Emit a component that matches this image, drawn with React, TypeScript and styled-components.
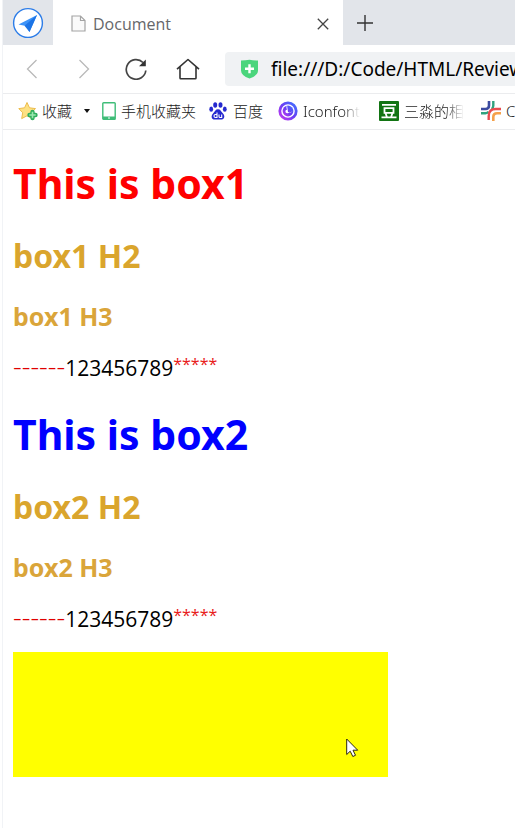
import React from "react";
import styled, { createGlobalStyle } from "styled-components";

const GlobalStyle = createGlobalStyle`
  * { box-sizing: border-box; }
  body {
    margin: 0;
    background: #fff;
    color: #000;
    font-family: "Noto Sans", "Noto Sans CJK SC", sans-serif;
    overflow-x: hidden;
  }
  button { border: 0; padding: 0; background: none; font: inherit; color: inherit; }
  svg { display: block; flex: none; }
`;

const Window = styled.div`
  min-height: 100vh;
  margin-left: 2px;
  border-left: 1px solid #f1f3f6;
  overflow: hidden;
`;

const TabStrip = styled.div`
  display: flex;
  height: 45px;
  background: #e2e5ea;
`;

const BrandButton = styled.button`
  width: 50px;
  display: grid;
  place-items: center;
`;

const Tab = styled.div`
  display: flex;
  align-items: center;
  flex: 0 0 290px;
  padding: 2px 13px 0 18px;
  background: #fff;
  font-family: "Open Sans", sans-serif;
  font-size: 16px;
  line-height: 24px;
  color: #66676a;
`;

const TabTitle = styled.span`
  flex: 1;
  margin-left: 7px;
`;

const NewTabButton = styled.button`
  width: 44px;
  display: grid;
  place-items: center;
`;

const Toolbar = styled.div`
  display: flex;
  align-items: center;
  height: 49px;
  border-bottom: 1px solid #ebecee;
`;

const NavButtons = styled.nav`
  display: flex;
  flex: none;
  padding: 0 11px 0 3px;
`;

const NavButton = styled.button`
  width: 52px;
  height: 40px;
  display: grid;
  place-items: center;
`;

const AddressBar = styled.label`
  display: flex;
  flex: 1;
  align-items: center;
  gap: 12px;
  height: 34px;
  padding-left: 15px;
  border-radius: 4px 0 0 4px;
  background: #f0f2f4;
`;

const AddressInput = styled.input`
  flex: 1;
  min-width: 0;
  height: 32px;
  border: 0;
  padding: 0;
  outline: 0;
  background: none;
  color: #000;
  font-family: "Noto Sans", sans-serif;
  font-size: 19px;
`;

const Bookmarks = styled.nav`
  display: flex;
  align-items: center;
  height: 36px;
  padding: 0 0 2px 15px;
  border-bottom: 1px solid #ebecee;
  font-family: "Noto Sans", "Noto Sans CJK SC", sans-serif;
  font-size: 15px;
  font-weight: 300;
  line-height: 22px;
  color: #222;
`;

const Bookmark = styled.a<{ $width: number; $gap: number }>`
  display: flex;
  align-items: center;
  gap: ${(p) => p.$gap}px;
  flex: 0 0 ${(p) => p.$width}px;
  color: inherit;
  text-decoration: none;
  white-space: nowrap;
`;

const BookmarkLabel = styled.span<{ $fade?: boolean; $max?: number }>`
  overflow: hidden;
  max-width: ${(p) => (p.$max ? `${p.$max}px` : "none")};
  mask-image: ${(p) => (p.$fade ? "linear-gradient(to right, #000 70%, transparent)" : "none")};
`;

const Page = styled.main`
  padding: 20px 10px 0;
`;

const Box = styled.section`
  margin-bottom: 21px;
`;

const Title = styled.h1<{ $color: string }>`
  margin: 0 0 24px;
  padding-top: 5px;
  font-size: 41px;
  line-height: 56px;
  color: ${(p) => p.$color};
`;

const Subtitle = styled.h2`
  margin: 0 0 23px;
  font-size: 32px;
  line-height: 42px;
  color: #daa52d;
`;

const Heading = styled.h3`
  margin: 0 0 20px;
  font-size: 25px;
  line-height: 32px;
  color: #daa53a;
`;

const Paragraph = styled.p`
  display: flex;
  align-items: baseline;
  height: 28px;
  margin: 0;
  font-family: "Open Sans", sans-serif;
  font-size: 21px;
  line-height: 28px;
`;

const Prefix = styled.span`
  font-weight: 300;
  font-size: 27px;
  line-height: 28px;
  color: #e00000;
`;

const Suffix = styled.span`
  align-self: flex-start;
  font-size: 16px;
  line-height: 24px;
  color: #e81818;
`;

const YellowBlock = styled.div`
  position: relative;
  width: 375px;
  max-width: 100%;
  height: 125px;
  background: #ff0;
`;

const Pointer = styled.svg`
  position: absolute;
  left: 333px;
  top: 86px;
`;

const BrandIcon = () => (
  <svg width="32" height="32" viewBox="0 0 32 32">
    <circle cx="16" cy="16" r="14.4" fill="#fff" stroke="#2d7de8" strokeWidth="1.4" />
    <path d="M25 8 6.500 17.500l7.500 1.500 3.500 6z" fill="#3d93f8" />
    <path d="M25 8 12.500 18.800l5 6.200z" fill="#1c74e6" />
  </svg>
);

const PageIcon = () => (
  <svg width="15" height="17" viewBox="0 0 15 17" fill="#fafafa" stroke="#a4a4a4" strokeWidth="1.2">
    <path d="M1 1h8.5L14 5.5V16H1zM9.5 1v4.5H14" />
  </svg>
);

const CloseIcon = () => (
  <svg width="14" height="14" viewBox="0 0 14 14" stroke="#444" strokeWidth="1.3">
    <path d="m1.8 1.8 10.4 10.4m0-10.4L1.8 12.2" />
  </svg>
);

const PlusIcon = () => (
  <svg width="18" height="18" viewBox="0 0 18 18" stroke="#333" strokeWidth="1.4">
    <path d="M9 1v16M1 9h16" />
  </svg>
);

const ChevronIcon = ({ flip }: { flip?: boolean }) => (
  <svg width="12" height="20" viewBox="0 0 12 20" fill="none" stroke="#b9b9b9" strokeWidth="1.3">
    <path d={flip ? "m1.5 1 9 9-9 9" : "m10.5 1-9 9 9 9"} />
  </svg>
);

const ReloadIcon = () => (
  <svg width="22" height="22" viewBox="0 0 22 22" fill="none" stroke="#444" strokeWidth="1.7">
    <path d="M20.8 12.500A9.800 9.800 0 1 1 18 4.500" />
    <path d="M20.8 1.500v6.800h-6.800z" fill="#333" stroke="none" />
  </svg>
);

const HomeIcon = () => (
  <svg width="24" height="22" viewBox="0 0 24 22" fill="none" stroke="#333" strokeWidth="1.6" strokeLinejoin="round">
    <path d="M1 11.2 12 1.5l11 9.7M4 9v11q0 .8.8.8h14.4q.8 0 .8-.8V9" />
  </svg>
);

const ShieldIcon = () => (
  <svg width="19" height="20" viewBox="0 0 19 20">
    <path d="M1 1.500q4.500 0 8.500-.8 4 .8 8.500.8v10q0 5-8.500 8Q1 16.500 1 11.500z" fill="#4bd57c" />
    <path d="M9.500 5.200v9M5 9.700h9" stroke="#fff" strokeWidth="2.400" />
  </svg>
);

const StarIcon = () => (
  <svg width="20" height="20" viewBox="0 0 20 20">
    <path d="m9 1.500 2.500 5.300 6 .8-4.300 4.100 1 5.900L9 14.800l-5.300 2.800 1-5.900L.8 7.600l5.800-.8z" fill="#fde183" stroke="#edbc4c" strokeLinejoin="round" />
    <path d="M14.500 11v6M11.500 14h6" stroke="#2fae5e" strokeWidth="4.400" strokeLinecap="round" />
    <path d="M14.500 10.800v6.400M11.300 14h6.400" stroke="#9be8b0" strokeWidth="1.600" />
  </svg>
);

const CaretIcon = () => (
  <svg width="6" height="4" viewBox="0 0 6 4">
    <path d="M0 0h6L3 4z" fill="#111" />
  </svg>
);

const PhoneIcon = () => (
  <svg width="14" height="18" viewBox="0 0 14 18">
    <rect x=".8" y=".8" width="12.400" height="16.400" rx=".8" fill="#fff" stroke="#3fbd78" strokeWidth="1.400" />
    <path d="M.8 14.500h12.400v3H.8z" fill="#3fbd78" />
    <path d="M6 16h2" stroke="#fff" />
  </svg>
);

const PawIcon = () => (
  <svg width="18" height="18" viewBox="0 0 18 18" fill="#2529cf">
    <ellipse cx="6.200" cy="3" rx="2" ry="2.800" />
    <ellipse cx="11.500" cy="3" rx="2" ry="2.800" />
    <ellipse cx="2.200" cy="7.200" rx="1.900" ry="2.600" />
    <ellipse cx="15.800" cy="7.200" rx="1.900" ry="2.600" />
    <path d="M9 7.200c2.400 0 3 2.200 4.600 3.800 3.400 3.400 1.200 6.800-1.600 6.600-2-.3-4-.3-6 0-3 .3-5-3.200-1.600-6.600C6 9.400 6.600 7.200 9 7.200z" />
    <path d="M8 10.500v5H6.500q-1.500 0-1.500-1.500t1.500-1.500H8m2 0v2q0 1 1 1h1.700v-3" fill="none" stroke="#fff" strokeWidth="1.100" />
  </svg>
);

const IconfontIcon = () => (
  <svg width="20" height="20" viewBox="0 0 20 20">
    <defs>
      <linearGradient id="ring" x1="1" y1="0" x2="0" y2="1">
        <stop offset="0" stopColor="#3f74ff" />
        <stop offset=".5" stopColor="#6a3df4" />
        <stop offset="1" stopColor="#c63af0" />
      </linearGradient>
    </defs>
    <circle cx="10" cy="10" r="8.200" fill="#fff" stroke="url(#ring)" strokeWidth="2.800" />
    <circle cx="10" cy="10" r="5.400" fill="url(#ring)" />
    <path d="M9 3.800c-.8 2-.6 3.500 0 4.600a2 2 0 1 0 2.300 2.400c1.500.4 3 .2 4.300-.8a5.600 5.600 0 0 1-5.600 1z" fill="#fff" />
  </svg>
);

const BeanIcon = () => (
  <svg width="20" height="20" viewBox="0 0 20 20">
    <rect width="20" height="20" rx="1" fill="#127413" />
    <path d="M3 3.800h14M5.500 7.200h9v4.600h-9zM6.500 12l1.300 3.800M13.500 12l-1.300 3.800M2.500 16.400h15" fill="none" stroke="#fff" strokeWidth="1.800" />
  </svg>
);

const KnotIcon = () => (
  <svg width="20" height="20" viewBox="0 0 20 20" fill="none">
    <path d="M8 0v4.500Q8 8 4.500 8H0" stroke="#3c4ba0" strokeWidth="2.600" />
    <path d="M12.300 0v4.500q0 2-1.500 3.500M0 12.200h4.500q2 0 3.200-1.400" stroke="#2fa27e" strokeWidth="2.400" />
    <path d="M7.700 19v-4q0-7 7-7H20" stroke="#e84b4f" strokeWidth="2.400" />
    <path d="M12.300 20v-4q0-3.800 3.800-3.800H20" stroke="#f5a14b" strokeWidth="2.600" />
  </svg>
);

const PointerIcon = () => (
  <Pointer width="13" height="20" viewBox="0 0 13 20">
    <path d="M.7 1v15.500l3.500-3.300 2.600 5.300 2.700-1.200L7 12.200h4.700z" fill="#fff" stroke="#2b2710" strokeWidth="1" />
  </Pointer>
);

function DemoBox({ name, color }: { name: string; color: string }) {
  return (
    <Box>
      <Title $color={color}>This is {name}</Title>
      <Subtitle>{name} H2</Subtitle>
      <Heading>{name} H3</Heading>
      <Paragraph>
        <Prefix>------</Prefix>
        <span>123456789</span>
        <Suffix>*****</Suffix>
      </Paragraph>
    </Box>
  );
}

export default function App() {
  return (
    <>
      <GlobalStyle />
      <Window>
        <TabStrip>
          <BrandButton aria-label="Browser menu"><BrandIcon /></BrandButton>
          <Tab>
            <PageIcon />
            <TabTitle>Document</TabTitle>
            <button aria-label="Close tab"><CloseIcon /></button>
          </Tab>
          <NewTabButton aria-label="New tab"><PlusIcon /></NewTabButton>
        </TabStrip>
        <Toolbar>
          <NavButtons>
            <NavButton aria-label="Back"><ChevronIcon /></NavButton>
            <NavButton aria-label="Forward"><ChevronIcon flip /></NavButton>
            <NavButton aria-label="Reload"><ReloadIcon /></NavButton>
            <NavButton aria-label="Home"><HomeIcon /></NavButton>
          </NavButtons>
          <AddressBar>
            <ShieldIcon />
            <AddressInput aria-label="Address" defaultValue="file:///D:/Code/HTML/Review" />
          </AddressBar>
        </Toolbar>
        <Bookmarks>
          <Bookmark href="#" $width={84} $gap={4}>
            <StarIcon />
            <BookmarkLabel>收藏</BookmarkLabel>
            <span />
            <span />
            <CaretIcon />
          </Bookmark>
          <Bookmark href="#" $width={107} $gap={5}>
            <PhoneIcon />
            <BookmarkLabel>手机收藏夹</BookmarkLabel>
          </Bookmark>
          <Bookmark href="#" $width={69} $gap={6}>
            <PawIcon />
            <BookmarkLabel>百度</BookmarkLabel>
          </Bookmark>
          <Bookmark href="#" $width={101} $gap={5}>
            <IconfontIcon />
            <BookmarkLabel $fade $max={60}>Iconfont</BookmarkLabel>
          </Bookmark>
          <Bookmark href="#" $width={102} $gap={5}>
            <BeanIcon />
            <BookmarkLabel $fade $max={60}>三淼的相</BookmarkLabel>
          </Bookmark>
          <Bookmark href="#" $width={60} $gap={5}>
            <KnotIcon />
            <BookmarkLabel>C</BookmarkLabel>
          </Bookmark>
        </Bookmarks>
        <Page>
          <DemoBox name="box1" color="#ff0000" />
          <DemoBox name="box2" color="#0000ff" />
          <YellowBlock><PointerIcon /></YellowBlock>
        </Page>
      </Window>
    </>
  );
}
